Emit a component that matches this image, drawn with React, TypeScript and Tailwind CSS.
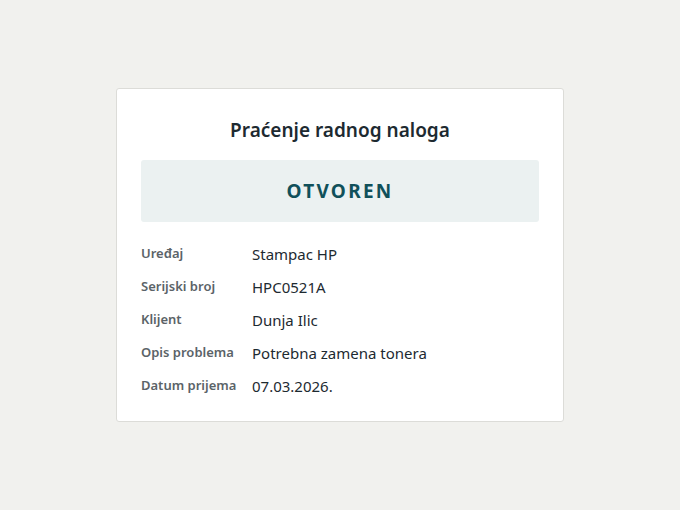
import React from 'react';

const rows: [string, string][] = [
  ['Uređaj', 'Stampac HP'],
  ['Serijski broj', 'HPC0521A'],
  ['Klijent', 'Dunja Ilic'],
  ['Opis problema', 'Potrebna zamena tonera'],
  ['Datum prijema', '07.03.2026.'],
];

export default function App() {
  return (
    <div className="min-h-screen bg-[#f1f1ee] flex items-center justify-center font-['Noto_Sans',sans-serif]">
      <div className="w-[448px] bg-white border border-[#dcdcd8] rounded-[3px] px-6 pt-[27px] pb-[24px]">
        <h1 className="text-center text-[19px] leading-[28px] font-semibold text-[#1d2a31]">Praćenje radnog naloga</h1>
        <div className="mt-[16px] h-[62px] rounded-[3px] bg-[#ebf1f1] flex items-center justify-center">
          <span className="text-[19px] font-bold tracking-[0.12em] text-[#10505a]">OTVOREN</span>
        </div>
        <div className="mt-[21px] flex flex-col gap-[11px]">
          {rows.map(([label, value]) => (
            <div key={label} className="flex items-start">
              <div className="w-[111px] shrink-0 text-[13px] leading-[20px] font-semibold text-[#5b6368]">{label}</div>
              <div className="text-[15px] leading-[22px] text-[#1d2a31]">{value}</div>
            </div>
          ))}
        </div>
      </div>
    </div>
  );
}
